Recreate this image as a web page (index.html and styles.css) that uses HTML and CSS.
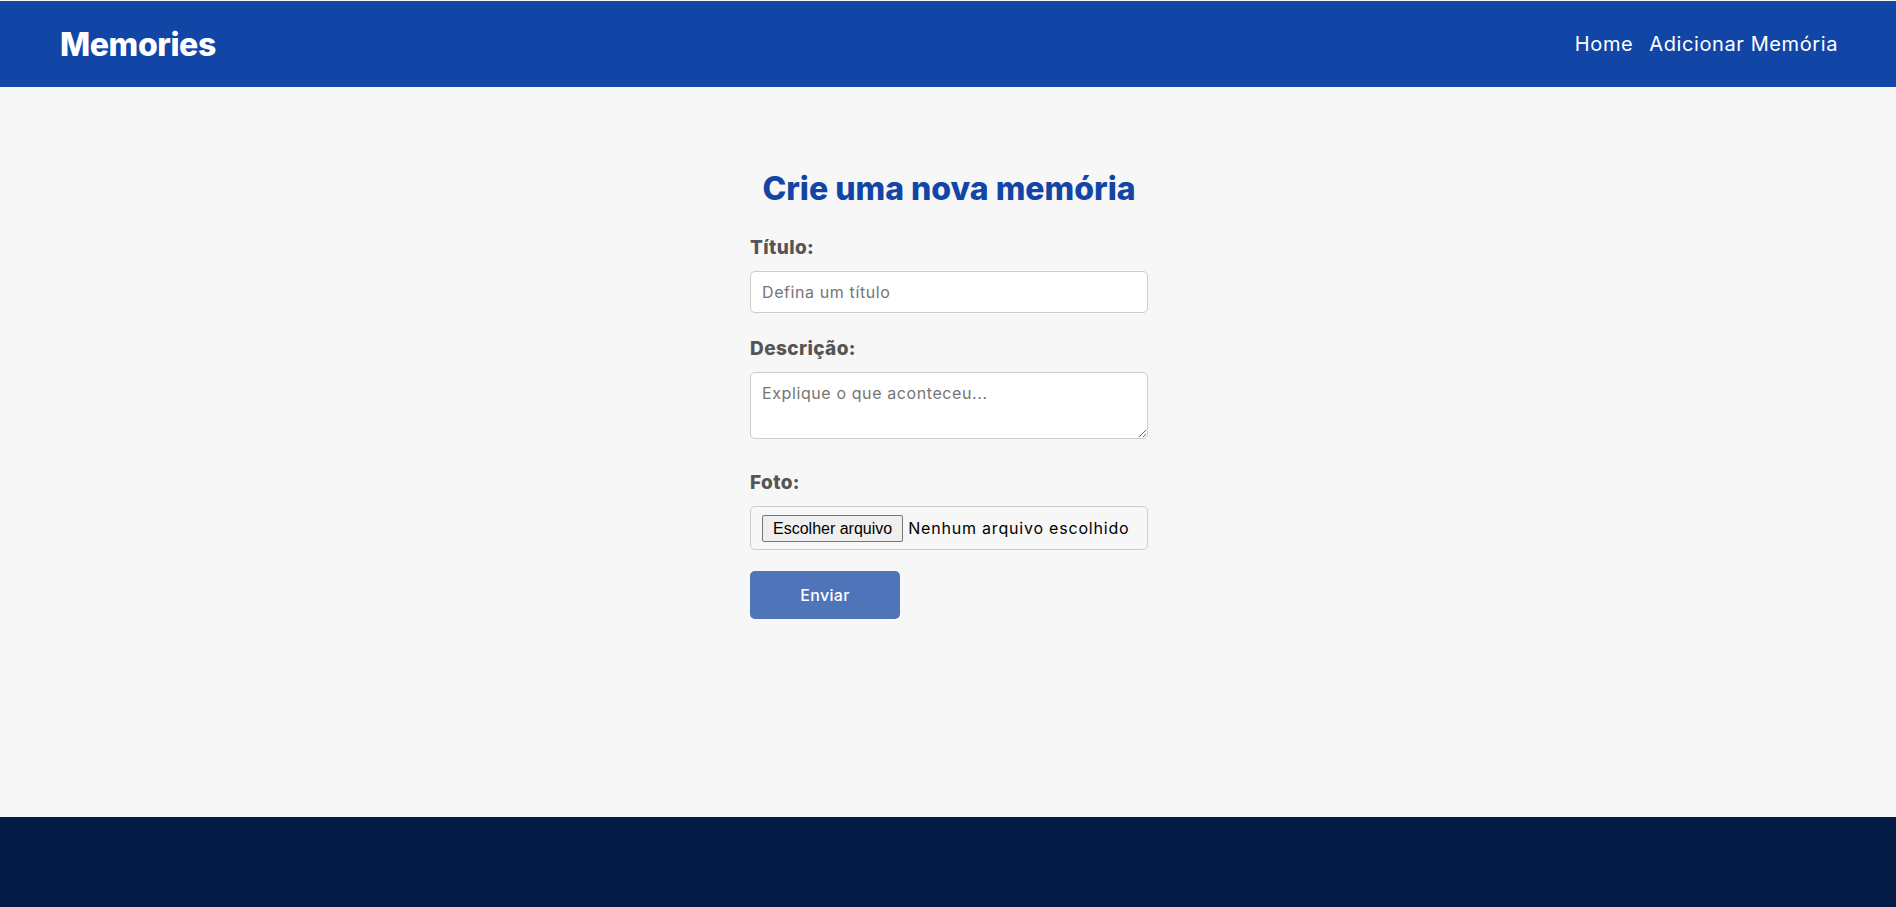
FILE: index.html
```html
<!DOCTYPE html>
<html lang="pt-BR">
<head>
<meta charset="utf-8">
<title>Memories</title>
<link rel="stylesheet" href="styles.css">
</head>
<body>
<header class="topbar">
  <a class="logo" href="#">Memories</a>
  <nav class="nav">
    <a href="#">Home</a>
    <a href="#">Adicionar Memória</a>
  </nav>
</header>
<main class="main">
  <form class="memory-form">
    <h2 class="form-title">Crie uma nova memória</h2>
    <label class="field-label" for="title">Título:</label>
    <input class="field-input" id="title" type="text" placeholder="Defina um título">
    <label class="field-label" for="desc">Descrição:</label>
    <textarea class="field-textarea" id="desc" placeholder="Explique o que aconteceu..."></textarea>
    <label class="field-label" for="photo">Foto:</label>
    <label class="file-box" for="photo">
      <span class="file-btn">Escolher arquivo</span>
      <span class="file-name">Nenhum arquivo escolhido</span>
    </label>
    <input class="file-hidden" id="photo" type="file">
    <button class="submit-btn" type="button">Enviar</button>
  </form>
</main>
<footer class="footer"></footer>
</body>
</html>
```
FILE: styles.css
```css
* { box-sizing: border-box; }
html, body { margin: 0; padding: 0; }
body {
  background: #f7f7f7;
  font-family: Inter, "Open Sans", sans-serif;
  padding-top: 1px;
}
.topbar {
  height: 86px;
  background: #1146a6;
  display: flex;
  align-items: center;
  justify-content: space-between;
  padding: 0 58px 0 60px;
}
.logo {
  color: #fff;
  text-decoration: none;
  font-weight: 800;
  font-size: 32px;
  letter-spacing: -0.4px;
}
.nav { display: flex; gap: 16px; }
.nav a {
  color: #fff;
  text-decoration: none;
  font-size: 20px;
  letter-spacing: 0.6px;
}
.main {
  min-height: 730px;
  padding-top: 82px;
}
.memory-form {
  width: 400px;
  margin: 0 auto;
  padding-left: 2px;
  display: flex;
  flex-direction: column;
  align-items: stretch;
}
.form-title {
  margin: 0 0 27px;
  text-align: center;
  color: #1146a6;
  font-size: 32px;
  line-height: 40px;
  font-weight: 800;
}
.field-label {
  display: block;
  color: #555;
  font-weight: 800;
  font-size: 19px;
  line-height: 24px;
  letter-spacing: 0.4px;
  margin-bottom: 11px;
}
.field-input, .field-textarea, .file-box {
  border: 1px solid #ccc;
  border-radius: 5px;
  background: #fff;
  font-family: Inter, "Open Sans", sans-serif;
  font-size: 16px;
  color: #333;
  letter-spacing: 0.6px;
}
.field-input {
  height: 42px;
  padding: 0 11px;
  margin-bottom: 24px;
}
.field-textarea {
  height: 67px;
  padding: 8px 11px;
  line-height: 24px;
  margin-bottom: 32px;
  resize: vertical;
}
.field-input::placeholder, .field-textarea::placeholder { color: #757575; }
.file-box {
  height: 44px;
  display: flex;
  align-items: center;
  padding: 0 11px;
  margin-bottom: 21px;
  background: #f7f7f7;
  cursor: pointer;
  letter-spacing: 0;
}
.file-btn {
  font-family: "Liberation Sans", Arial, sans-serif;
  font-size: 16px;
  color: #000;
  background: #efefef;
  border: 1px solid #767676;
  border-radius: 2px;
  height: 27px;
  line-height: 25px;
  padding: 0 10px;
  margin-right: 5px;
}
.file-name {
  color: #000;
  font-size: 16px;
  letter-spacing: 0.8px;
  white-space: nowrap;
}
.file-hidden { display: none; }
.submit-btn {
  width: 150px;
  height: 48px;
  border: none;
  border-radius: 5px;
  background: #4f74ba;
  color: #fff;
  font-family: Inter, "Open Sans", sans-serif;
  font-size: 16px;
  font-weight: 500;
  letter-spacing: 0.3px;
}
.footer {
  height: 90px;
  background: #031b45;
}
```
